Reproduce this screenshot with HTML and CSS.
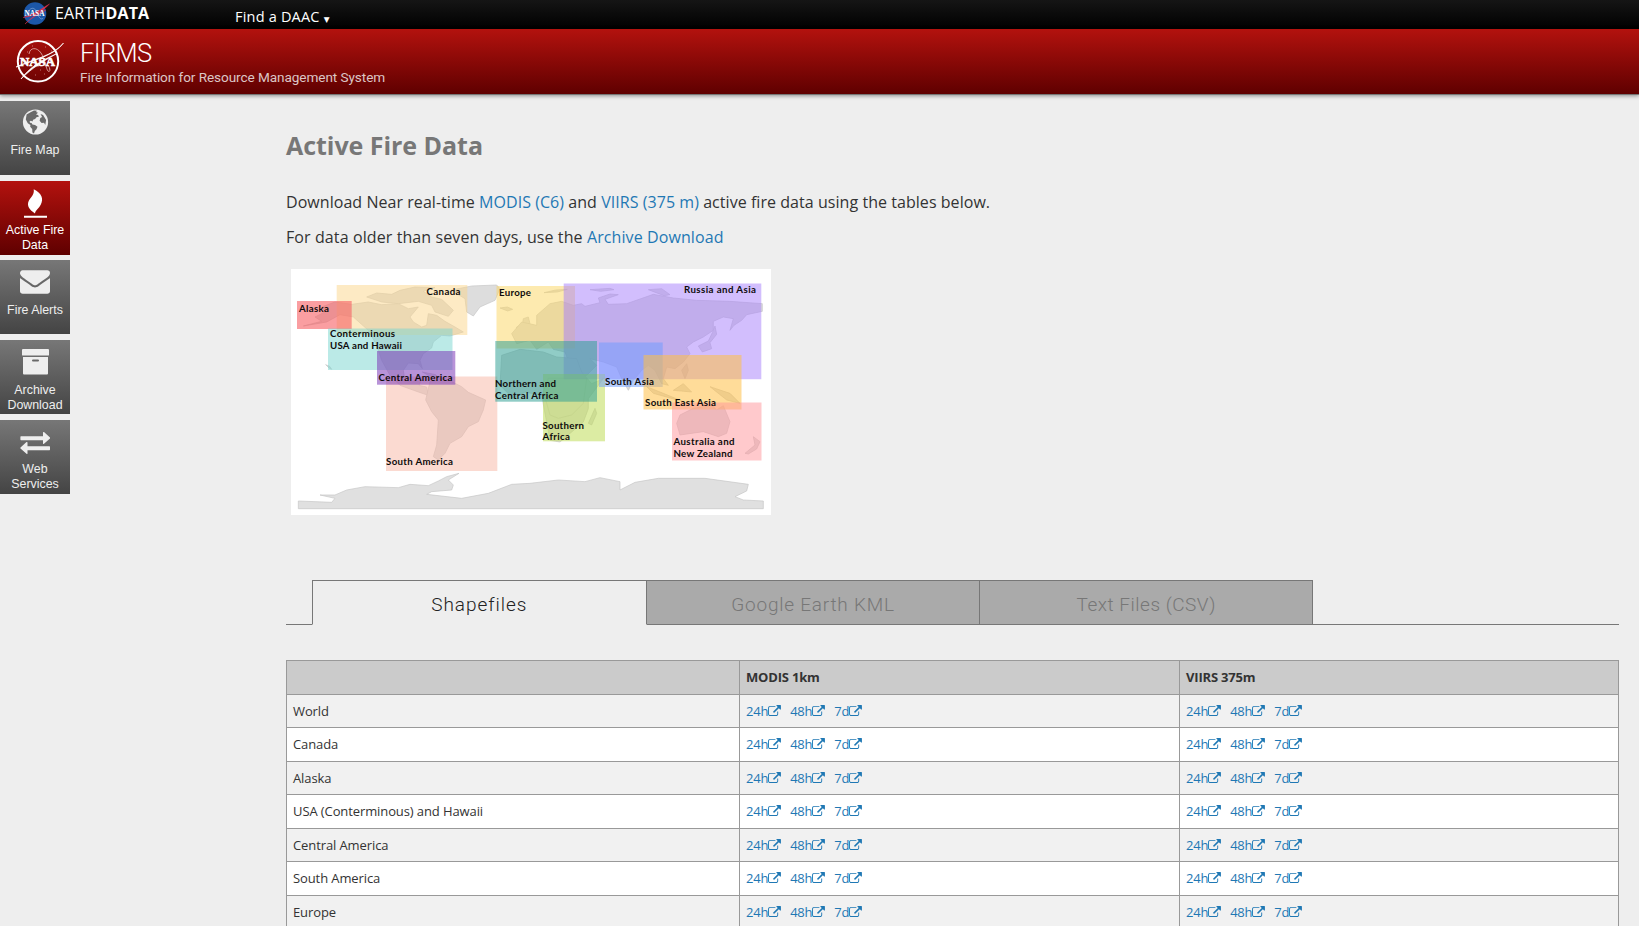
FILE: index.html
```html
<!DOCTYPE html>
<html lang="en">
<head>
<meta charset="utf-8">
<title>Active Fire Data | FIRMS</title>
<link rel="stylesheet" href="styles.css">
</head>
<body>
<svg class="defs" width="0" height="0">
  <symbol id="ext" viewBox="0 0 1792 1536"><path d="M1408 928v320q0 119-84.500 203.500T1120 1536H288q-119 0-203.500-84.500T0 1248V416q0-119 84.500-203.500T288 128h704q14 0 23 9t9 23v64q0 14-9 23t-23 9H288q-66 0-113 47t-47 113v832q0 66 47 113t113 47h832q66 0 113-47t47-113V928q0-14 9-23t23-9h64q14 0 23 9t9 23zm384-864v512q0 26-19 45t-45 19-45-19L1507 445 855 1097q-10 10-23 10t-23-10L695 983q-10-10-10-23t10-23L1347 285l-176-176q-19-19-19-45t19-45 45-19h512q26 0 45 19t19 45z"/></symbol>
</svg>

<header class="topbar">
  <a class="brand">
    <svg class="meatball" width="28" height="24" viewBox="0 0 28 24">
      <circle cx="13" cy="11.500" r="11.300" fill="#1c57a8"/>
      <path d="M5 14C6 6 12 4 14 9s5 10 7 7" fill="none" stroke="#7fa6d8" stroke-width=".7"/>
      <path d="M27.500 2C20 6 14 12 1 15.500 10 15 20 10 27.500 2zM3 22C9 16 15 11 24 8 17 12 9 16 3 22z" fill="#e0314b" stroke="#e0314b" stroke-width=".4"/>
      <text x="2.500" y="14.300" class="meatball-text" textLength="20" lengthAdjust="spacingAndGlyphs">NASA</text>
    </svg>
    <span class="brand-name">EARTH<b>DATA</b></span>
  </a>
  <a class="daac">Find a DAAC <span class="caret">▼</span></a>
</header>

<div class="banner">
  <svg class="nasa" width="50" height="44" viewBox="0 0 50 44">
    <circle cx="23" cy="22.300" r="20.200" fill="none" stroke="#fff" stroke-width="2"/>
    <path d="M14 15c1-7 8-7 12-1s5 16 7 18 3-2 0-6" fill="none" stroke="#e6b5b2" stroke-width=".8"/>
    <path d="M48.500 4C40 16 20 21 1 28 18 20 38 17 48.500 4zM6 40C14 29 25 22 41 15 27 23 17 29 6 40z" fill="#fff" stroke="#fff" stroke-width=".7"/>
    <path d="M12 13h.7M17 7h.7M30 8h.7M34 30h.7M29 35h.7M20 36h.7M25 31h.7M36 12h.7" stroke="#f0cfcd" stroke-width=".8"/>
    <text x="5" y="26.500" class="nasa-text" textLength="35" lengthAdjust="spacingAndGlyphs">NASA</text>
  </svg>
  <div class="titles">
    <div class="title">FIRMS</div>
    <div class="subtitle">Fire Information for Resource Management System</div>
  </div>
</div>

<div class="page">
  <nav class="side">
    <a class="side-item">
      <svg width="30" height="26" viewBox="0 0 30 26"><circle cx="15.500" cy="13" r="12.600" fill="#eee"/><path fill="#6a6a6a" d="M11 3l3-1.500 3 .2-1 1.300 2 .7-2 1.700 2 .5 1 1.500-2.500.8-1.400 1.700-2 .8-.6 1.800-1.600-.7-1.300.8.4 1.200 1.600.2.8 1.600 2.600.4 2.500 1.700-1 2.600-1.700 1.700-.8 2.600-1.600-1-.2-3.600-2-2.200.2-1.800-2.600-1.800-2-3.600.8-5zM20.500 5l2.600 1 3 5-.8 5-1.300-2.200-2.400.2-2-2.200.7-2.800 1.800-1z"/></svg>
      <span>Fire Map</span></a>
    <a class="side-item active">
      <svg width="30" height="30" viewBox="0 0 30 30"><path fill="#fff" d="M13.700.2c8 4 10.300 9.500 7 15.500-1.700 3.500-5.300 5.500-5.700 8.700C9.600 21 6.500 17 8.700 12c1.600-3.600 6-6 5-11.800zM4 26.800h23v2H4z"/></svg>
      <span>Active Fire<br>Data</span></a>
    <a class="side-item">
      <svg class="mail" width="30" height="30" viewBox="0 0 1792 1792"><path fill="#eee" d="M1792 710v794q0 66-47 113t-113 47h-1472q-66 0-113-47t-47-113v-794q44 49 101 87 362 246 497 345 57 42 92.500 65.500t94.500 48 110 24.500h2q51 0 110-24.500t94.500-48 92.500-65.500q170-123 498-345 57-39 100-87zm0-294q0 79-49 151t-122 123q-376 261-468 325-10 7-42.500 31t-54 38.500-52 32.500-57.500 27-50 9h-2q-23 0-50-9t-57.500-27-52-32.500-54-38.500-42.500-31q-91-64-262-182.500t-205-142.500q-62-42-117-115.500t-55-136.500q0-78 41.500-130t118.500-52h1472q65 0 112.500 47t47.500 113z"/></svg>
      <span>Fire Alerts</span></a>
    <a class="side-item">
      <svg class="low" width="30" height="26" viewBox="0 0 30 26"><path fill="#eee" d="M2 1q0-1 1-1h25q1 0 1 1v5q0 .6-1 .6H3Q2 6.600 2 6zM3 8h25v16.500q0 1-1 1H4q-1 0-1-1zM13 10.500q-1 0-1 1t1 1h5q1 0 1-1t-1-1z" fill-rule="evenodd"/></svg>
      <span>Archive<br>Download</span></a>
    <a class="side-item">
      <svg class="lower" width="30" height="26" viewBox="0 0 30 26"><path fill="#eee" d="M1 5.200h22V1.500q.2-1 1-.4l6 5.500q.4.500 0 1l-6 5.200q-.8.500-1-.4V9.200H1q-.6 0-.6-.6V5.800q0-.6.600-.6zM29.400 15.200H7.500v-3.700q-.2-1-1-.4l-6 5.500q-.4.500 0 1l6 5.200q.8.500 1-.4v-3.200h21.900q.6 0 .6-.6v-2.800q0-.6-.6-.6z"/></svg>
      <span>Web<br>Services</span></a>
  </nav>

  <main class="content">
    <h1>Active Fire Data</h1>
    <p>Download Near real-time <a>MODIS (C6)</a> and <a>VIIRS (375 m)</a> active fire data using the tables below.</p>
    <p class="older">For data older than seven days, use the <a>Archive Download</a></p>

    <svg class="map" width="480" height="246" viewBox="291 269 480 246">
      <rect x="291" y="269" width="480" height="246" fill="#fff"/>
      <g class="land">
        <g transform="translate(285 262) scale(.33333)">
          <path d="M55 192L110 178 90 165 120 150 110 135 150 120 200 127 250 120 290 128 340 125 370 140 400 135 375 165 385 180 410 195 425 190 430 155 455 160 480 178 510 195 535 210 495 222 470 220 445 240 440 258 415 275 405 295 412 320 400 305 370 303 355 325 360 355 385 360 395 345 412 345 402 370 425 375 430 400 400 390 345 370 315 340 290 295 275 250 250 205 205 165 165 158 125 180z"/>
          <path d="M245 105L275 93 320 97 345 85 390 75 450 77 415 88 440 105 470 112 505 145 490 163 450 150 440 130 400 118 340 125 290 120z"/>
          <path d="M500 84L560 72 635 69 645 80 630 115 585 135 565 162 545 150 540 110 515 95z"/>
          <path d="M412 330l40 8 12 12-30-8zM645 138l22-3 16 7-15 5zM122 308l12 5 6 9-8-4z"/>
          <path d="M715 170l15-5 5 20 15 30-5 12-30 3 8-20-12-15zM695 195l12-5 2 20-15 8z"/>
        </g>
        <g transform="translate(530 262) scale(.33333)">
          <path d="M20 190L20 160 60 125 95 118 130 130 155 125 165 133 210 122 205 108 240 96 265 98 225 112 235 127 290 125 370 97 430 108 500 115 600 118 697 125 697 148 650 158 635 175 612 190 600 205 610 170 580 165 550 178 550 205 520 225 490 240 470 255 480 275 460 300 435 320 410 315 400 350 415 370 395 365 375 325 355 310 335 325 310 355 295 385 275 350 260 315 220 300 180 290 200 310 170 340 145 350 120 310 105 270 70 262 55 240 20 262 0 235-40 245-55 215-25 180z"/>
          <path d="M555 192l5 25-20 25 5 18-28 10-12-18 30-15 12-25zM42 92l35-8 35-2-30 8zM180 83l60-4 12 4-40 5zM355 83l40-3 25 18-18 3zM455 325l15-20 5 20-10 25zM430 385l30-20 25 25z"/>
          <path d="M-85 280L-30 262 40 270 80 285 140 290 155 330 185 365 220 350 175 410 175 440 160 480 90 540 60 535 35 400-15 390-50 410-90 370z"/>
        </g>
        <g transform="translate(285 385) scale(.33333)">
          <path d="M435-10L480-20 530 5 550 22 602 45 595 75 580 110 550 125 530 155 495 175 480 205 460 225 445 215 455 180 460 105 440 80 422 45z"/>
          <path class="ice" d="M40 348L140 352 150 340 105 330 150 330 185 315 240 305 340 308 375 298 430 302 460 288 485 275 522 265 490 285 505 300 500 315 440 320 425 328 530 340 610 325 680 298 735 295 820 285 900 290 945 278 1005 290 1005 315 1050 292 1120 280 1260 280 1390 298 1385 318 1350 335 1375 345 1435 348 1435 371H40z"/>
        </g>
        <g transform="translate(530 385) scale(.33333)">
          <path d="M40 20L55-20H170L160 55 125 90 85 100 60 90zM175 115l20-45 5 15-15 35zM440 115L450 90 490 70 545 60 560 75 580 62 600 110 590 145 565 155 520 140 450 150zM645 205l30-25-5-25 20 15-10 22-25 15zM350 5l50 20 60 25-90-25zM540 5l60 20 30 30-40-10z"/>
        </g>
      </g>
      <rect x="336.700" y="285" width="130.600" height="50" fill="#fbd58a" fill-opacity=".5"/>
      <rect x="297" y="301" width="54.700" height="28" fill="#f65e62" fill-opacity=".6"/>
      <rect x="328" y="328.500" width="124.500" height="41.500" fill="#78d5d0" fill-opacity=".5"/>
      <rect x="386" y="376.500" width="111.300" height="94.500" fill="#f8b6a4" fill-opacity=".5"/>
      <rect x="377" y="351" width="78.300" height="33.700" fill="#7d3ab8" fill-opacity=".55"/>
      <rect x="496.500" y="286" width="78.500" height="62.500" fill="#fbd55f" fill-opacity=".5"/>
      <rect x="563.700" y="283.500" width="197.600" height="95.700" fill="#a67efb" fill-opacity=".5"/>
      <rect x="543" y="374" width="62" height="67.300" fill="#bfdc58" fill-opacity=".55"/>
      <rect x="495.300" y="341" width="101.700" height="60.700" fill="#32a095" fill-opacity=".54"/>
      <rect x="599" y="342.500" width="63.700" height="44.500" fill="#6c9cff" fill-opacity=".5"/>
      <rect x="643.500" y="355" width="98" height="54.500" fill="#ffbf45" fill-opacity=".55"/>
      <rect x="672" y="402.500" width="89.500" height="58" fill="#ff9499" fill-opacity=".5"/>
      <g class="labels">
        <text x="299" y="312" textLength="30">Alaska</text>
        <text x="426.500" y="295" textLength="34">Canada</text>
        <text x="330" y="337" textLength="65">Conterminous</text>
        <text x="330" y="348.500" textLength="72">USA and Hawaii</text>
        <text x="378.500" y="380.500" textLength="74">Central America</text>
        <text x="386" y="464.500" textLength="67">South America</text>
        <text x="499" y="295.500" textLength="32">Europe</text>
        <text x="684" y="293" textLength="72">Russia and Asia</text>
        <text x="495" y="387" textLength="61">Northern and</text>
        <text x="495" y="398.500" textLength="63.500">Central Africa</text>
        <text x="605" y="385" textLength="49">South Asia</text>
        <text x="645" y="406" textLength="71">South East Asia</text>
        <text x="542.500" y="428.500" textLength="41.500">Southern</text>
        <text x="542.500" y="440" textLength="27.500">Africa</text>
        <text x="673.500" y="445" textLength="61">Australia and</text>
        <text x="673.500" y="456.500" textLength="59">New Zealand</text>
      </g>
    </svg>

    <div class="tabs">
      <a class="tab current">Shapefiles</a>
      <a class="tab kml">Google Earth KML</a>
      <a class="tab csv">Text Files (CSV)</a>
    </div>

    <table class="data">
      <thead><tr><th class="region"></th><th class="modis">MODIS 1km</th><th>VIIRS 375m</th></tr></thead>
      <tbody id="rows"></tbody>
    </table>
  </main>
</div>
<script src="rows.js"></script>
</body>
</html>
```

FILE: rows.js
```js
var regions = ['World', 'Canada', 'Alaska', 'USA (Conterminous) and Hawaii', 'Central America', 'South America', 'Europe'];
var links = ['24h', '48h', '7d'].map(function (t) {
  return '<a class="dl">' + t + '<svg class="ext"><use href="#ext"/></svg></a>';
}).join('');
document.getElementById('rows').innerHTML = regions.map(function (r) {
  return '<tr><td>' + r + '</td><td>' + links + '</td><td>' + links + '</td></tr>';
}).join('');
```

FILE: styles.css
```css
* { box-sizing: border-box; }
html, body { height: 926px; overflow: hidden; }
body { margin: 0; background: #eee; color: #333; font-family: "Open Sans", sans-serif; font-size: 16px; }
a { color: #1f78b4; }
.defs { position: absolute; }

.topbar { height: 29px; background: linear-gradient(#151515, #000); display: flex; align-items: flex-start; }
.brand { display: flex; width: 235px; padding-left: 22px; color: #fff; }
.meatball { margin-top: 2px; flex: none; }
.meatball-text { font: bold 8px "Liberation Serif", serif; fill: #fff; }
.brand-name { margin-left: 5px; font-size: 16px; line-height: 26px; letter-spacing: .18px; }
.daac { color: #fff; font-size: 14.500px; line-height: 33px; letter-spacing: .2px; white-space: nowrap; }
.caret { font-size: 7.500px; line-height: 1; font-family: "DejaVu Sans", sans-serif; }

.banner { height: 66px; display: flex; background: linear-gradient(#b3120e, #5f0000); border-bottom: 1px solid #777; box-shadow: 0 1px 4px rgba(0,0,0,.4); }
.nasa { margin: 10px 0 0 15px; flex: none; }
.nasa-text { font: bold 12px "Liberation Serif", serif; fill: #fff; stroke: #fff; stroke-width: .6px; }
.titles { margin-left: 15px; color: #fff; font-family: Roboto, sans-serif; white-space: nowrap; }
.title { font-size: 25.500px; font-weight: 300; line-height: 30px; margin-top: 9px; letter-spacing: -.6px; }
.subtitle { font-size: 13.600px; line-height: 18px; letter-spacing: -.08px; color: #dcc6c6; }

.page { display: flex; }
.side { width: 70px; padding-top: 6px; display: flex; flex-direction: column; gap: 5.700px; flex: none; }
.side-item { height: 74px; padding-top: 8px; display: flex; flex-direction: column; align-items: center; background: linear-gradient(#777, #444); color: #eee; font: 12.400px/15px "Liberation Sans", sans-serif; text-align: center; white-space: nowrap; }
.side-item svg { flex: none; margin-bottom: 8px; }
.side-item.active { background: linear-gradient(#b3120e, #5f0000); color: #fff; }
.side-item.active svg { margin-bottom: 4px; }
.side-item .mail { margin-top: -2px; margin-bottom: 7px; }
.side-item .low { margin-top: 1px; margin-bottom: 8px; }
.side-item .lower { margin-top: 3px; margin-bottom: 5px; }

.content { width: 1333px; margin-left: 216px; padding-top: 32px; }
h1 { margin: 0; font-size: 25px; line-height: 36px; color: #777; letter-spacing: -.04px; }
h1 + p { margin-top: 27px; }
p { margin: 0 0 11px; line-height: 24px; letter-spacing: .05px; }
.older { letter-spacing: .1px; }
.map { display: block; margin: 20px 0 0 5px; }
.land path { fill: #ddd; stroke: #c6c6c6; stroke-width: 2; }
.land .ice { fill: #e0e0e0; }
.labels { font: 700 9.700px Lato, sans-serif; fill: #0e0b0b; }

.tabs { height: 45px; margin-top: 65px; padding-left: calc(2% - 1px); border-bottom: 1px solid #777; display: flex; }
.tab { width: 333.250px; height: 45px; border: 1px solid #777; border-left-width: 0; background: #aaa; color: #777; font: 300 19px/47px Roboto, sans-serif; letter-spacing: .95px; text-align: center; flex: none; }
.tab.current { width: 335.250px; border-left-width: 1px; border-bottom-color: #eee; background: #eee; color: #222; }
.tab.kml { letter-spacing: .78px; }
.tab.csv { letter-spacing: .5px; }

.data { width: 1333px; margin-top: 35px; border-collapse: collapse; table-layout: fixed; font-size: 13px; letter-spacing: -.1px; }
.data th, .data td { height: 33.500px; padding: 0 6px; border: 1px solid #999; text-align: left; }
.data th { background: #cbcbcb; letter-spacing: -.18px; }
.data .region { width: 453px; }
.data .modis { width: 440px; }
.data tr { background: #fff; }
.data tbody tr:nth-child(odd) { background: #f1f1f1; }
.dl { margin-right: 8.900px; letter-spacing: -.2px; }
.ext { width: 13px; height: 11px; fill: #1f78b4; }
```
